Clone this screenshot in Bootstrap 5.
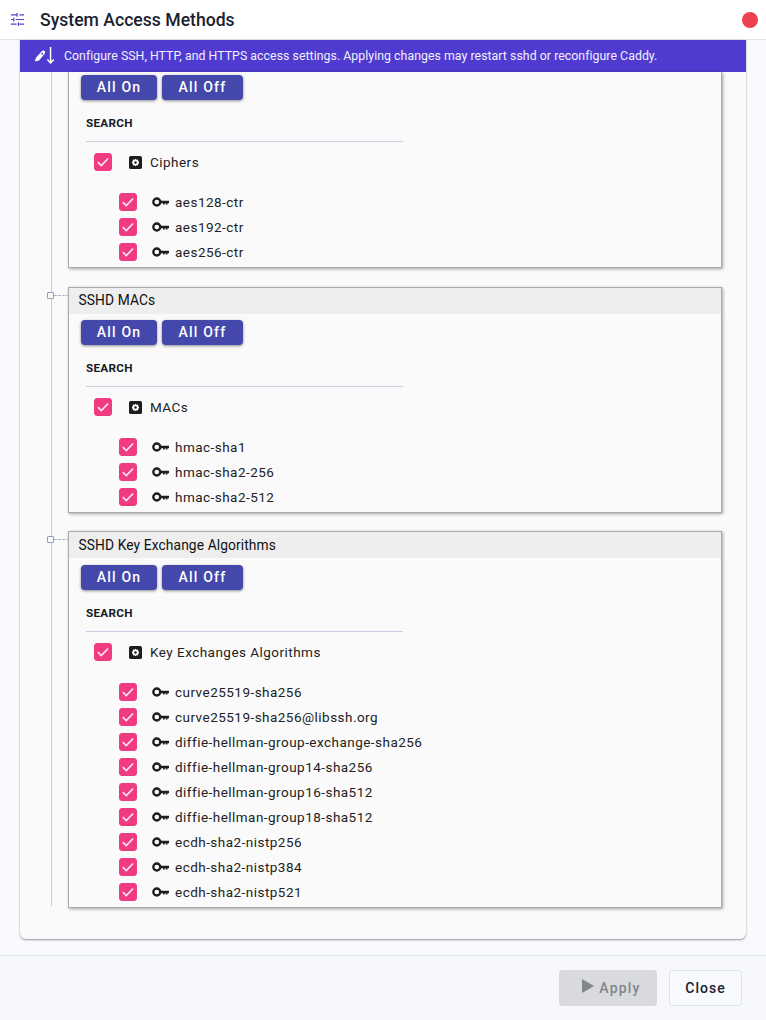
<!DOCTYPE html>
<html lang="en">
<head>
<meta charset="utf-8">
<title>System Access Methods</title>
<link href="https://cdn.jsdelivr.net/npm/bootstrap@5.3.0/dist/css/bootstrap.min.css" rel="stylesheet">
<style>
html,body{height:100%;overflow:hidden}
body{font-family:Roboto,"Liberation Sans",sans-serif;background:#f8fafd;color:#212529}
.shell{height:1020px}
.topbar{height:40px;background:#fff;border-bottom:1px solid #dfe3ec;padding:0 8px 0 10px}
.topbar svg{width:15px;height:15px;color:#5540cc;margin-right:15px}
.topbar h1{font-size:17.6px;font-weight:500;margin:0;padding-top:2px;color:#1b2130;letter-spacing:0;line-height:1}
.dot-close{width:16px;height:16px;border-radius:50%;background:#ec4250}
.mainwrap{width:726px;margin:0 0 0 20px;height:899px;background:#fafafa;border-radius:0 0 6px 6px;box-shadow:0 1px 2px rgba(0,0,0,.4);overflow:hidden}
.banner{height:32px;background:#4f3bcf;color:#f2f0ff;font-size:12.3px;padding-left:14px;letter-spacing:.05px}
.banner svg{width:30px;height:18px;margin-right:0;flex:none}
.flow{position:relative;padding-left:48px;padding-right:24px}
.flow::before{content:"";position:absolute;left:31px;top:0;height:834px;width:1px;background:#c6cbd6}
.sect{position:relative;background:#fafafa;border:1px solid #aaa;box-shadow:1px 1px 3px rgba(0,0,0,.35);margin-bottom:18px}
.sect.cut{border-top:0;margin-bottom:19px}
.sect.cut .btnrow{padding-top:3px}
.sect.tall .btnrow{padding-top:7px}
.sect.tall .sect-head{line-height:27px}
.node{position:absolute;left:-22px;top:4px;width:7px;height:7px;border:1px solid #8ea0bb;background:#fafafa;border-radius:1px}
.node::after{content:"";position:absolute;left:6px;top:2px;width:15px;border-top:1px dashed #aeb4c0}
.sect-head{height:26px;background:#eee;font-size:13.8px;color:#111;padding-left:9.5px;line-height:25px;letter-spacing:.1px}
.btnrow{padding:6px 0 0 12px;gap:5px}
.btn.act{background:#4448ab;color:#fff;font-size:14px;font-weight:500;letter-spacing:1.2px;height:25px;padding:0;border:0;border-radius:4px;box-shadow:0 1px 3px rgba(0,0,0,.45);line-height:25px}
.w-on{width:76px}.w-off{width:81px}
.srch{font-size:11.7px;font-weight:700;color:#141a26;letter-spacing:.3px;margin:16px 0 0 17px;line-height:14px}
.rule-line{width:317px;margin:11px 0 0 17px;height:1px;background:#cfcde4}
.treeb{margin:0;padding:0;list-style:none;font-size:13.5px;letter-spacing:.47px;color:#222}
.rowp{height:18px;margin:11px 0 0 25px}
.rowc{height:18px;margin:0 0 7px 50px}
.rows{padding-top:22px;padding-bottom:0}
.rows .rowc:last-child{margin-bottom:6px}
.form-check-input.pk{width:18px;height:18px;margin:0;background-color:#f03a82;border-color:#f03a82;border-radius:3px;flex:none;background-size:18px;background-image:url("data:image/svg+xml,%3csvg xmlns='http://www.w3.org/2000/svg' viewBox='0 0 18 18'%3e%3cpath fill='none' stroke='%23ffe6f0' stroke-width='1.7' d='M3.800 9.200l3.500 3.300 6.800-7'/%3e%3c/svg%3e")}
.ic-g{width:13px;height:13px;margin:0 8px 0 17px;flex:none}
.ic-k{width:17px;height:10px;margin:0 6px 0 15px;flex:none}
.foot{height:65px;border-top:1px solid #dfe3ec;margin-top:16px;background:#f6f8fc;padding-right:24px;gap:12px}
.btn.ap{width:98px;height:36px;background:#d9dadd;border:0;color:#83868c;font-size:14px;font-weight:500;letter-spacing:1.2px;padding:1px 0 0 7px;border-radius:3px;opacity:1}
.btn.ap svg{width:12px;height:14px;margin-right:5px;vertical-align:0}
.btn.cl{width:73px;height:36px;background:#f8fafd;border:1px solid #dfe3ec;color:#1b2130;font-size:14px;font-weight:500;letter-spacing:1px;padding:1px 0 0;border-radius:3px}
</style>
</head>
<body>
<svg width="0" height="0" class="d-block position-absolute">
  <defs>
    <symbol id="gear" viewBox="0 0 14 14"><rect width="14" height="14" rx="2" fill="#1d1d1f"/><path d="M7 3l1 1 1.600-.1.4 1.500L11 7l-1 1.500-.4 1.600L8 10l-1 1-1-1-1.600.1L4 8.500 3 7l1-1.600.4-1.500L6 4z" fill="#fff"/><circle cx="7" cy="7" r="1.300" fill="#1d1d1f"/></symbol>
    <symbol id="key" viewBox="0 0 17 10"><circle cx="4.800" cy="5" r="3.500" fill="none" stroke="#1d1d1f" stroke-width="2.300"/><path d="M8 3.700h9v2.500h-1.500v1.300h-1.700V6.200h-1v1.300h-1.700V6.200H8z" fill="#1d1d1f"/></symbol>
  </defs>
</svg>
<div class="shell d-flex flex-column">
  <header class="topbar d-flex align-items-center flex-shrink-0">
    <svg viewBox="0 0 16 16" fill="none" stroke="currentColor" stroke-width="1.300"><path d="M1 3h6M10 3h5M7.500 1v4M1 8h2M6 8h9M4 6v4M1 13h6M10 13h5M9 11v4"/></svg>
    <h1>System Access Methods</h1>
    <span class="dot-close ms-auto"></span>
  </header>
  <main class="mainwrap flex-shrink-0">
    <div class="banner d-flex align-items-center">
      <svg viewBox="0 0 30 18" fill="#fff"><path fill-rule="evenodd" d="M1 14.500l.8-3.500 5.700-6.500c1-1 2.200-1.200 3-.5.800.7.700 2 0 3L5 13.500zM7.500 6.200a.9.9 0 1 0 1.400 1.100.9.900 0 1 0-1.400-1.100z"/><path d="M15.800 0h1.500v14l2-2 1 1-3.700 4-3.700-4 1-1 1.900 2z"/></svg>
      <span>Configure SSH, HTTP, and HTTPS access settings. Applying changes may restart sshd or reconfigure Caddy.</span>
    </div>
    <div class="flow">
      <section class="sect cut">
        <div class="btnrow d-flex"><button class="btn act w-on">All On</button><button class="btn act w-off">All Off</button></div>
        <div class="srch">SEARCH</div>
        <div class="rule-line"></div>
        <div class="treeb">
          <div class="rowp d-flex align-items-center"><input class="form-check-input pk" type="checkbox" checked aria-label="Ciphers"><svg class="ic-g"><use href="#gear"/></svg><span>Ciphers</span></div>
          <div class="rows">
            <div class="rowc d-flex align-items-center"><input class="form-check-input pk" type="checkbox" checked aria-label="aes128-ctr"><svg class="ic-k"><use href="#key"/></svg><span>aes128-ctr</span></div>
            <div class="rowc d-flex align-items-center"><input class="form-check-input pk" type="checkbox" checked aria-label="aes192-ctr"><svg class="ic-k"><use href="#key"/></svg><span>aes192-ctr</span></div>
            <div class="rowc d-flex align-items-center"><input class="form-check-input pk" type="checkbox" checked aria-label="aes256-ctr"><svg class="ic-k"><use href="#key"/></svg><span>aes256-ctr</span></div>
          </div>
        </div>
      </section>
      <section class="sect">
        <span class="node"></span>
        <div class="sect-head">SSHD MACs</div>
        <div class="btnrow d-flex"><button class="btn act w-on">All On</button><button class="btn act w-off">All Off</button></div>
        <div class="srch">SEARCH</div>
        <div class="rule-line"></div>
        <div class="treeb">
          <div class="rowp d-flex align-items-center"><input class="form-check-input pk" type="checkbox" checked aria-label="MACs"><svg class="ic-g"><use href="#gear"/></svg><span>MACs</span></div>
          <div class="rows">
            <div class="rowc d-flex align-items-center"><input class="form-check-input pk" type="checkbox" checked aria-label="hmac-sha1"><svg class="ic-k"><use href="#key"/></svg><span>hmac-sha1</span></div>
            <div class="rowc d-flex align-items-center"><input class="form-check-input pk" type="checkbox" checked aria-label="hmac-sha2-256"><svg class="ic-k"><use href="#key"/></svg><span>hmac-sha2-256</span></div>
            <div class="rowc d-flex align-items-center"><input class="form-check-input pk" type="checkbox" checked aria-label="hmac-sha2-512"><svg class="ic-k"><use href="#key"/></svg><span>hmac-sha2-512</span></div>
          </div>
        </div>
      </section>
      <section class="sect tall">
        <span class="node"></span>
        <div class="sect-head">SSHD Key Exchange Algorithms</div>
        <div class="btnrow d-flex"><button class="btn act w-on">All On</button><button class="btn act w-off">All Off</button></div>
        <div class="srch">SEARCH</div>
        <div class="rule-line"></div>
        <div class="treeb">
          <div class="rowp d-flex align-items-center"><input class="form-check-input pk" type="checkbox" checked aria-label="Key Exchanges Algorithms"><svg class="ic-g"><use href="#gear"/></svg><span>Key Exchanges Algorithms</span></div>
          <div class="rows">
            <div class="rowc d-flex align-items-center"><input class="form-check-input pk" type="checkbox" checked aria-label="a"><svg class="ic-k"><use href="#key"/></svg><span>curve25519-sha256</span></div>
            <div class="rowc d-flex align-items-center"><input class="form-check-input pk" type="checkbox" checked aria-label="b"><svg class="ic-k"><use href="#key"/></svg><span>curve25519-sha256@libssh.org</span></div>
            <div class="rowc d-flex align-items-center"><input class="form-check-input pk" type="checkbox" checked aria-label="c"><svg class="ic-k"><use href="#key"/></svg><span>diffie-hellman-group-exchange-sha256</span></div>
            <div class="rowc d-flex align-items-center"><input class="form-check-input pk" type="checkbox" checked aria-label="d"><svg class="ic-k"><use href="#key"/></svg><span>diffie-hellman-group14-sha256</span></div>
            <div class="rowc d-flex align-items-center"><input class="form-check-input pk" type="checkbox" checked aria-label="e"><svg class="ic-k"><use href="#key"/></svg><span>diffie-hellman-group16-sha512</span></div>
            <div class="rowc d-flex align-items-center"><input class="form-check-input pk" type="checkbox" checked aria-label="f"><svg class="ic-k"><use href="#key"/></svg><span>diffie-hellman-group18-sha512</span></div>
            <div class="rowc d-flex align-items-center"><input class="form-check-input pk" type="checkbox" checked aria-label="g"><svg class="ic-k"><use href="#key"/></svg><span>ecdh-sha2-nistp256</span></div>
            <div class="rowc d-flex align-items-center"><input class="form-check-input pk" type="checkbox" checked aria-label="h"><svg class="ic-k"><use href="#key"/></svg><span>ecdh-sha2-nistp384</span></div>
            <div class="rowc d-flex align-items-center"><input class="form-check-input pk" type="checkbox" checked aria-label="i"><svg class="ic-k"><use href="#key"/></svg><span>ecdh-sha2-nistp521</span></div>
          </div>
        </div>
      </section>
    </div>
  </main>
  <footer class="foot d-flex align-items-center justify-content-end flex-shrink-0">
    <button class="btn ap" disabled><svg viewBox="0 0 12 14" fill="currentColor"><path d="M0 0l12 7-12 7z"/></svg>Apply</button>
    <button class="btn cl">Close</button>
  </footer>
</div>
<script src="https://cdn.jsdelivr.net/npm/bootstrap@5.3.0/dist/js/bootstrap.bundle.min.js"></script>
</body>
</html>
